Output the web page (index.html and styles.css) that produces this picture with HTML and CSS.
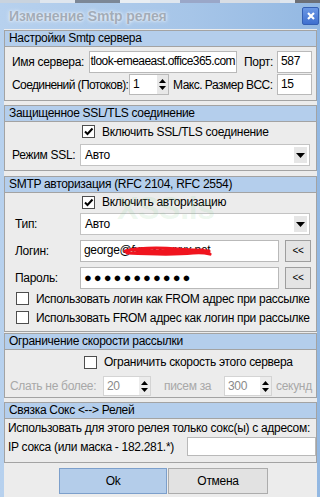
FILE: index.html
```html
<!DOCTYPE html>
<html lang="ru">
  <head>
    <meta charset="UTF-8" />
    <meta name="viewport" content="width=device-width, initial-scale=1.0" />
    <title>Изменение Smtp релея</title>
    <link rel="stylesheet" href="styles.css">
  </head>
  <body>
    <div class="desk">
      <span class="d d1"></span><span class="d d2"></span><span class="d d3"></span><span class="d d4"></span><span class="d d5"></span><span class="d d6"></span>
    </div>
    <div class="window">
      <div class="titlebar">
        <span class="title">Изменение Smtp релея</span>
        <span class="close">
          <svg width="10" height="10" viewBox="0 0 10 10"><path d="M2 2 L8 8 M8 2 L2 8" stroke="#fff" stroke-width="2.2" /></svg>
        </span>
      </div>
      <div class="client">
        <!-- Настройки сервера -->
        <section class="group g1">
          <div class="group-head">Настройки Smtp сервера</div>
          <div class="group-body">
            <div class="row h22">
              <span class="lbl w-server">Имя сервера:</span>
              <div class="field f-server"><span>tlook-emeaeast.office365.com</span></div>
              <span class="lbl w-port">Порт:</span>
              <div class="field f-small">587</div>
            </div>
            <div class="row h21 mt1">
              <span class="lbl w-conn">Соединений (Потоков):</span>
              <div class="spin s-conn"><span class="spin-val">1</span><span class="spin-btn"><svg width="7" height="11" viewBox="0 0 7 11"><path d="M3.5 0 L7 4 L0 4 Z M0 7 L7 7 L3.5 11 Z" fill="#000" /></svg></span></div>
              <span class="lbl w-bcc">Макс. Размер BCC:</span>
              <div class="field f-small">15</div>
            </div>
          </div>
        </section>

        <!-- SSL -->
        <section class="group g2">
          <div class="group-head">Защищенное SSL/TLS соединение</div>
          <div class="group-body">
            <div class="row h19 cb-ssl">
              <span class="cb"><svg width="11" height="11" viewBox="0 0 11 11"><path d="M2 5.5 L4.5 8 L9.5 2.5" stroke="#000" stroke-width="2" fill="none" /></svg></span>
              <span class="cb-text">Включить SSL/TLS соединение</span>
            </div>
            <div class="row h22 mt3">
              <span class="lbl w-ssl">Режим SSL:</span>
              <div class="select">
                <span class="select-val">Авто</span>
                <span class="select-btn"><svg width="9" height="5" viewBox="0 0 9 5"><path d="M0 0 L9 0 L4.5 5 Z" fill="#000" /></svg></span>
              </div>
            </div>
          </div>
        </section>

        <!-- Авторизация -->
        <section class="group g3">
          <div class="group-head">SMTP авторизация (RFC 2104, RFC 2554)</div>
          <div class="group-body">
            <span class="watermark">XSS.is</span>
            <div class="row h18 cb-auth">
              <span class="cb"><svg width="11" height="11" viewBox="0 0 11 11"><path d="M2 5.5 L4.5 8 L9.5 2.5" stroke="#000" stroke-width="2" fill="none" /></svg></span>
              <span class="cb-text">Включить авторизацию</span>
            </div>
            <div class="row h22 mt2">
              <span class="lbl w-auth">Тип:</span>
              <div class="select">
                <span class="select-val">Авто</span>
                <span class="select-btn"><svg width="9" height="5" viewBox="0 0 9 5"><path d="M0 0 L9 0 L4.5 5 Z" fill="#000" /></svg></span>
              </div>
            </div>
            <div class="row h22 mt5">
              <span class="lbl w-auth">Логин:</span>
              <div class="field f-login">george@fxxxxxxxxxx.net
                <svg class="scribble" width="90" height="14" viewBox="0 0 90 14"><path d="M2 7 C20 3 40 4 55 5 C65 6 75 6 86 7 M4 9 C25 10 50 11 70 9 C78 8 83 9 87 10 M10 6 C30 8 55 8 80 6" stroke="#f0141e" stroke-width="3.2" fill="none" stroke-linecap="round" /></svg>
              </div>
              <span class="btn-small">&lt;&lt;</span>
            </div>
            <div class="row h22 mt5">
              <span class="lbl w-auth">Пароль:</span>
              <div class="field f-login dots">●●●●●●●●●●●</div>
              <span class="btn-small">&lt;&lt;</span>
            </div>
            <div class="row h19 cb-opt">
              <span class="cb"></span>
              <span class="cb-text">Использовать логин как FROM адрес при рассылке</span>
            </div>
            <div class="row h19 cb-opt">
              <span class="cb"></span>
              <span class="cb-text">Использовать FROM адрес как логин при рассылке</span>
            </div>
          </div>
        </section>

        <!-- Скорость -->
        <section class="group g4">
          <div class="group-head">Ограничение скорости рассылки</div>
          <div class="group-body">
            <div class="row h20 cb-speed">
              <span class="cb"></span>
              <span class="cb-text">Ограничить скорость этого сервера</span>
            </div>
            <div class="row h20 mt4 disabled">
              <span class="lbl w-send">Слать не более:</span>
              <div class="spin s-rate"><span class="spin-val">20</span><span class="spin-btn"><svg width="7" height="11" viewBox="0 0 7 11"><path d="M3.5 0 L7 4 L0 4 Z M0 7 L7 7 L3.5 11 Z" fill="#000" /></svg></span></div>
              <span class="lbl w-mails">писем за</span>
              <div class="spin s-rate"><span class="spin-val">300</span><span class="spin-btn"><svg width="7" height="11" viewBox="0 0 7 11"><path d="M3.5 0 L7 4 L0 4 Z M0 7 L7 7 L3.5 11 Z" fill="#000" /></svg></span></div>
              <span class="lbl w-sec">секунд</span>
            </div>
          </div>
        </section>

        <!-- Сокс -->
        <section class="group g5">
          <div class="group-head">Связка Сокс &lt;--&gt; Релей</div>
          <div class="group-body">
            <div class="row h18">
              <span class="lbl">Использовать для этого релея только сокс(ы) с адресом:</span>
            </div>
            <div class="row h19">
              <span class="lbl w-ip">IP сокса (или маска - 182.281.*)</span>
              <div class="field f-ip"></div>
            </div>
          </div>
        </section>

        <div class="buttons">
          <span class="btn btn-ok">Ok</span>
          <span class="btn btn-cancel">Отмена</span>
        </div>
      </div>
    </div>
  </body>
</html>
```

FILE: styles.css
```css
body {
  margin: 0;
  width: 320px;
  height: 497px;
  overflow: hidden;
  font-family: "Liberation Sans", Arial, sans-serif;
  font-size: 12px;
  letter-spacing: -0.3px;
  color: #000;
  background-color: #a9c7e9;
}
.desk {
  display: flex;
  height: 3px;
  background-color: #dfe6ee;
}
.d { height: 3px; }
.d1 { width: 40px; background: #c9d3de; }
.d2 { width: 45px; background: #7c8796; margin-left: 35px; }
.d3 { width: 30px; background: #e9eef3; }
.d4 { width: 40px; background: #9aa7c8; margin-left: 30px; }
.d5 { width: 60px; background: #d8dde4; }
.d6 { width: 25px; background: #6c6f76; margin-left: 15px; }

.window {
  padding: 0 3px 0 4px;
  background: linear-gradient(to right, #b7d1ee, #a6c5e8 60%, #93b8e2);
}
.titlebar {
  display: flex;
  align-items: center;
  justify-content: space-between;
  height: 26px;
  padding-left: 5px;
}
.title {
  font-size: 14px;
  font-weight: bold;
  letter-spacing: -0.1px;
  color: #a2acb8;
  text-shadow: 0 0 4px #eef4fb, 0 0 2px #eef4fb;
}
.close {
  display: flex;
  align-items: center;
  justify-content: center;
  width: 15px;
  height: 16px;
  margin-right: -2px;
  background: linear-gradient(#6b98e4, #3f70cf);
  border: 1px solid #3560b4;
  border-radius: 2px;
}
.client {
  background-color: #ececec;
  padding-top: 1px;
  height: 468px;
}

/* группы */
.group {
  border: 1px solid #a3a3a3;
  background-color: #ececec;
}
.group-head {
  height: 15px;
  line-height: 15px;
  padding-left: 4px;
  background-color: #b4ceec;
  border-bottom: 1px solid #a3a3a3;
}
.group-body {
  position: relative;
  padding-left: 7px;
  padding-right: 4px;
}
.g1 .group-body { padding-top: 4px; height: 49px; }
.g2 { margin-top: 4px; }
.g2 .group-body { height: 48px; }
.g3 { margin-top: 5px; }
.g3 .group-body { height: 138px; }
.g4 { margin-top: 1px; }
.g4 .group-body { padding-top: 2px; height: 45px; padding-left: 5px; }
.g5 { margin-top: 4px; }
.g5 .group-body { height: 43px; padding-left: 3px; }

.row {
  display: flex;
  align-items: center;
}
.h18 { height: 18px; }
.h19 { height: 19px; }
.h20 { height: 20px; }
.h21 { height: 21px; }
.h22 { height: 22px; }
.mt1 { margin-top: 1px; }
.mt2 { margin-top: 2px; }
.mt3 { margin-top: 3px; }
.mt4 { margin-top: 4px; }
.mt5 { margin-top: 5px; }

.lbl { white-space: nowrap; flex-shrink: 0; box-sizing: border-box; }
.w-server { width: 77px; }
.w-port { width: 33px; margin-left: 7px; }
.w-conn { width: 117px; letter-spacing: -0.6px; }
.w-bcc { width: 104px; margin-left: 4px; letter-spacing: -0.5px; }
.w-ssl { width: 68px; }
.w-auth { width: 68px; padding-left: 3px; }
.w-send { width: 93px; }
.w-mails { width: 73px; padding-left: 13px; }
.w-sec { padding-left: 4px; }
.w-ip { width: 179px; }

.field {
  position: relative;
  flex-shrink: 0;
  box-sizing: border-box;
  height: 100%;
  padding: 0 3px;
  line-height: 19px;
  background-color: #fff;
  border: 1px solid #b9b9b9;
  white-space: nowrap;
  overflow: hidden;
}
.f-server {
  display: flex;
  justify-content: flex-end;
  width: 148px;
  padding: 0 1px;
  letter-spacing: -0.55px;
}
.f-small { width: 35px; }
.f-login { width: 199px; overflow: visible; }
.f-ip { width: 129px; height: 19px; }
.dots { font-size: 13px; letter-spacing: 2px; }
.scribble {
  position: absolute;
  left: 42px;
  top: 3px;
}

.spin {
  display: flex;
  flex-shrink: 0;
  box-sizing: border-box;
  height: 100%;
  background-color: #fff;
  border: 1px solid #b9b9b9;
}
.s-conn { width: 40px; }
.s-rate { width: 48px; }
.spin-val {
  flex: 1;
  padding-left: 3px;
  line-height: 18px;
}
.spin-btn {
  display: flex;
  align-items: center;
  justify-content: center;
  width: 11px;
  background-color: #e8e8e8;
}

.select {
  display: flex;
  align-items: center;
  flex-shrink: 0;
  box-sizing: border-box;
  width: 230px;
  height: 100%;
  background-color: #fff;
  border: 1px solid #c3c3c3;
}
.select-val { flex: 1; padding-left: 4px; }
.select-btn {
  display: flex;
  align-items: center;
  justify-content: center;
  width: 13px;
  height: 16px;
  margin-right: 2px;
  background-color: #e6e6e6;
}

.btn-small {
  flex-shrink: 0;
  box-sizing: border-box;
  width: 26px;
  height: 22px;
  margin-left: 6px;
  line-height: 20px;
  text-align: center;
  font-size: 10px;
  background-color: #e4e4e4;
  border: 1px solid #9e9e9e;
}

.cb {
  display: flex;
  align-items: center;
  justify-content: center;
  flex-shrink: 0;
  box-sizing: border-box;
  width: 13px;
  height: 13px;
  background-color: #fff;
  border: 1px solid #4d4d4d;
}
.cb-text { margin-left: 7px; white-space: nowrap; }
.cb-ssl { padding-left: 70px; }
.cb-auth { padding-left: 70px; }
.cb-opt { padding-left: 4px; }
.cb-speed { padding-left: 74px; }

.disabled .lbl { color: #a8a8a8; }
.disabled .spin { border-color: #d4d4d4; }
.disabled .spin-val { color: #8a8a8a; }
.disabled .spin-btn { background-color: #ececec; }

.watermark {
  position: absolute;
  left: 112px;
  top: -3px;
  font-size: 32px;
  font-weight: bold;
  color: rgba(130, 205, 140, 0.14);
  pointer-events: none;
}

.buttons {
  display: flex;
  margin-top: 5px;
  padding-left: 55px;
}
.btn {
  box-sizing: border-box;
  height: 26px;
  line-height: 24px;
  text-align: center;
}
.btn-ok {
  width: 108px;
  background-color: #b4cdea;
  border: 1px solid #7c9fcb;
}
.btn-cancel {
  width: 100px;
  margin-left: 1px;
  background-color: #e2e2e2;
  border: 1px solid #acacac;
}
```
